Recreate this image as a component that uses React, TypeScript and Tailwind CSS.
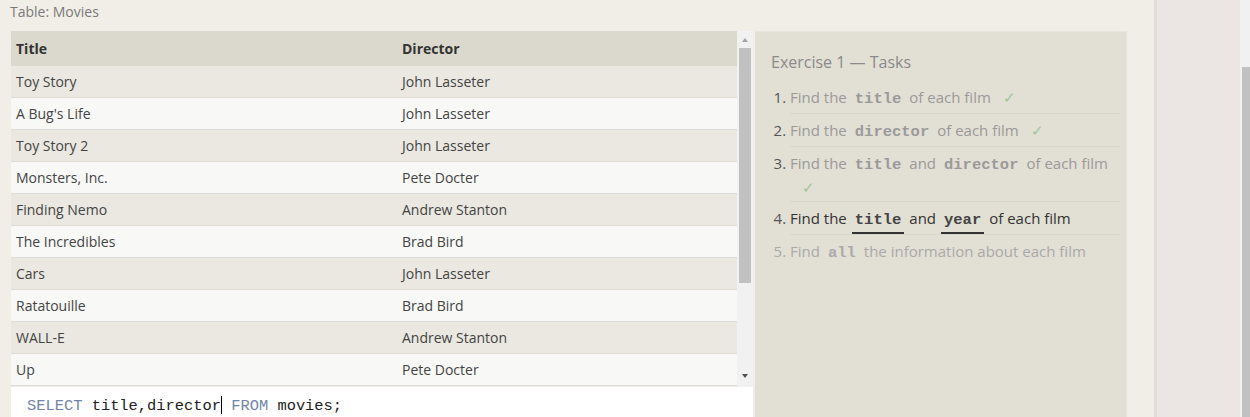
const movies = [
  ['Toy Story', 'John Lasseter'],
  ["A Bug's Life", 'John Lasseter'],
  ['Toy Story 2', 'John Lasseter'],
  ['Monsters, Inc.', 'Pete Docter'],
  ['Finding Nemo', 'Andrew Stanton'],
  ['The Incredibles', 'Brad Bird'],
  ['Cars', 'John Lasseter'],
  ['Ratatouille', 'Brad Bird'],
  ['WALL-E', 'Andrew Stanton'],
  ['Up', 'Pete Docter'],
]

const sans = "font-['Open_Sans',sans-serif]"
const mono = "font-['Liberation_Mono',monospace]"

function Code({ children, active }: { children: string; active?: boolean }) {
  return (
    <span
      className={`${mono} font-bold text-[15.5px] leading-none mx-[5px] px-[3px] ${
        active ? 'text-[#444] border-b-2 border-[#333] pb-[3px]' : ''
      }`}
    >
      {children}
    </span>
  )
}

function Check() {
  return <span className="text-[#9fc59a] ml-[12px] leading-none">✓</span>
}

export default function App() {
  return (
    <div className={`flex h-[417px] w-[1250px] overflow-hidden ${sans}`}>
      <div className="w-[1154px] shrink-0 bg-[#f1eee7] flex flex-col">
        <div className="h-[31px] shrink-0 pl-[10px] pt-[1px] text-[14px] text-[#7a7a7a]">Table: Movies</div>
        <div className="flex h-[386px] shrink-0 pl-[11px]">
          <div className="w-[742px] flex flex-col">
            <div className="flex h-[356px] shrink-0">
              <div className="w-[726px] text-[14px] text-[#444]">
                <div className="flex h-[35px] items-center bg-[#dbd9cd] font-bold text-[#333]">
                  <div className="w-[386px] pl-[5px]">Title</div>
                  <div className="pl-[5px]">Director</div>
                </div>
                {movies.map(([t, d], i) => (
                  <div
                    key={t}
                    className={`flex h-[32px] items-center border-b border-[#dedcd6] ${
                      i % 2 === 0 ? 'bg-[#eae8e0]' : 'bg-[#f8f8f6]'
                    }`}
                  >
                    <div className="w-[386px] pl-[5px]">{t}</div>
                    <div className="pl-[5px]">{d}</div>
                  </div>
                ))}
              </div>
              <div className="w-[16px] bg-[#f1f1f1] flex flex-col items-center">
                <div className="h-[17px] flex items-center justify-center">
                  <div className="w-0 h-0 border-x-[3.5px] border-x-transparent border-b-[4px] border-b-[#a3a3a3]" />
                </div>
                <div className="w-[12px] h-[235px] bg-[#c1c1c1]" />
                <div className="flex-1 flex items-end justify-center pb-[9px]">
                  <div className="w-0 h-0 border-x-[3.5px] border-x-transparent border-t-[4px] border-t-[#505050]" />
                </div>
              </div>
            </div>
            <div className="h-[30px] shrink-0 overflow-hidden bg-white pl-[16px] pt-[5px]">
              <span className={`${mono} text-[15.4px] text-[#222] leading-[22px]`}>
                <span className="text-[#7285a8]">SELECT</span> title,director
                <span className="inline-block w-[1px] h-[18px] bg-black align-[-4px]" />{' '}
                <span className="text-[#7285a8]">FROM</span> movies;
              </span>
            </div>
          </div>
          <div className="ml-[2px] w-[372px] bg-[#e2dfd4] border-t border-r border-[#e9e6de] pl-[16px] pr-[6px] pt-[18px]">
            <div className="text-[16px] text-[#8a8a8a] leading-[24px]">Exercise 1 — Tasks</div>
            <ol className="list-decimal pl-[19px] mt-[7px] text-[15px] leading-[24px] marker:text-[#555]">
              <li className="py-[4px] border-b border-[#d9d6ca] text-[#9a9a9a]">
                Find the<Code>title</Code>of each film<Check />
              </li>
              <li className="py-[4px] border-b border-[#d9d6ca] text-[#9a9a9a]">
                Find the<Code>director</Code>of each film<Check />
              </li>
              <li className="pt-[4px] pb-[2px] border-b border-[#d9d6ca] text-[#9a9a9a]">
                Find the<Code>title</Code>and<Code>director</Code>of each film
                <br />
                <Check />
              </li>
              <li className="py-[4px] border-b border-[#d9d6ca] text-[#333]">
                Find the<Code active>title</Code>and<Code active>year</Code>of each film
              </li>
              <li className="py-[4px] text-[#aaa] marker:text-[#aaa]">
                Find<Code>all</Code>the information about each film
              </li>
            </ol>
          </div>
        </div>
      </div>
      <div className="w-[3px] bg-[#e3dcd9]" />
      <div className="w-[83px] bg-[#ebe6e3]" />
      <div className="w-[10px] bg-[#f1f1f1] flex flex-col items-end pt-[67px]">
        <div className="w-[8px] flex-1 bg-[#c1c1c1]" />
      </div>
    </div>
  )
}
